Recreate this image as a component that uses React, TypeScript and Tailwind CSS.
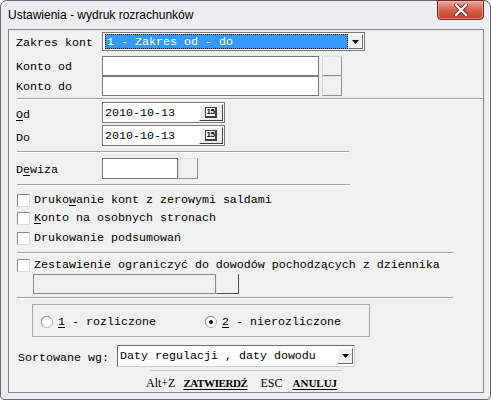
import React from 'react';

const mono = "font-['Liberation_Mono','Courier_New',monospace] text-[11.67px] leading-none text-black";

const Etched = ({ w, ml = 'ml-[8px]' }: { w?: string; ml?: string }) => (
  <div className={`h-[2px] border-t border-t-[#a0a0a0] border-b border-b-white ${ml} ${w ?? ''}`} />
);

const Field = ({ w, children }: { w: string; children?: React.ReactNode }) => (
  <div className={`h-full ${w} bg-white border border-[#7a7a7a] flex items-center pl-[2px]`}>{children}</div>
);

const SideButton = ({ w = 'w-[20px]' }: { w?: string }) => (
  <div className={`h-full ${w} bg-[#f0f0f0] border border-t-[#e0e0e0] border-l-[#d4d4d4] border-r-[#909090] border-b-[#909090]`} />
);

const Arrow = () => (
  <svg width="7" height="4" viewBox="0 0 7 4">
    <path d="M0 0h7L3.5 4z" fill="#000" />
  </svg>
);

const DropButton = ({ cls }: { cls: string }) => (
  <div className={`${cls} bg-[#f0f0f0] border border-t-white border-l-white border-r-[#6a6a6a] border-b-[#6a6a6a] flex items-center justify-center`}>
    <Arrow />
  </div>
);

const Checkbox = () => (
  <div className="w-[13px] h-[13px] bg-white border border-t-[#8a8a8a] border-l-[#8a8a8a] border-r-[#dedede] border-b-[#dedede] shrink-0" />
);

const Radio = ({ checked }: { checked?: boolean }) => (
  <svg width="12" height="12" viewBox="0 0 12 12" className="shrink-0">
    <circle cx="6" cy="6" r="5.5" fill="#fff" stroke="#b4b4b4" />
    <path d="M1.8 9.5A5 5 0 0 1 9.5 1.8" fill="none" stroke="#8c8c8c" />
    {checked && <circle cx="6" cy="6" r="2" fill="#111" />}
  </svg>
);

const CalendarButton = () => (
  <div className="h-[17px] w-[24px] bg-[#f0f0f0] border border-t-white border-l-white border-r-[#404040] border-b-[#404040] flex items-center justify-center">
    <div className="h-[11px] w-[12px] border border-[#404040] border-r-2 border-b-2 bg-white flex items-center justify-center">
      <span className="font-['Liberation_Sans',sans-serif] text-[8px] font-bold leading-none tracking-[-0.5px] text-black">15</span>
    </div>
  </div>
);

const DateField = ({ value }: { value: string }) => (
  <div className="h-full w-[123px] bg-white border border-[#7a7a7a] flex items-center justify-between pl-[2px] pr-[1px]">
    <span className={`${mono} translate-y-[1px]`}>{value}</span>
    <CalendarButton />
  </div>
);

const CheckRow = ({ mt, children }: { mt: string; children: React.ReactNode }) => (
  <div className={`${mt} h-[17px] flex items-center pl-[8px] gap-[4px]`}>
    <Checkbox />
    <span className={mono}>{children}</span>
  </div>
);

const U = ({ children }: { children: React.ReactNode }) => (
  <span className="underline underline-offset-[2px]">{children}</span>
);

export default function App() {
  return (
    <div className="w-[491px] h-[400px] bg-white">
      <div className="w-[491px] h-[400px] border border-[#6b6b6b] rounded-t-[7px] rounded-b-[4px] bg-[#eceef1] flex flex-col">
        {/* Title bar */}
        <div className="h-[28px] flex items-start">
          <span className="pl-[7px] pt-[7px] font-['Liberation_Sans',sans-serif] text-[12px] leading-[14px] text-black">
            Ustawienia - wydruk rozrachunków
          </span>
          <div className="flex-1" />
          <div className="-mt-[1px] mr-[6px] w-[47px] h-[20px] rounded-b-[4px] border border-[#6e2a22] bg-gradient-to-b from-[#e9a99c] via-[#d2604b] to-[#c2402c] flex items-center justify-center shadow-[inset_0_0_0_1px_rgba(255,200,190,0.5)]">
            <svg width="14" height="12" viewBox="0 0 14 12">
              <path d="M2 1l10 10M12 1L2 11" stroke="#5a1a12" strokeWidth="4" strokeLinecap="square" />
              <path d="M2 1l10 10M12 1L2 11" stroke="#fff" strokeWidth="2.4" strokeLinecap="square" />
            </svg>
          </div>
        </div>

        {/* Client area */}
        <div className="ml-[7px] w-[476px] h-[364px] border border-[#838383] bg-[#f0f0f0] flex flex-col">
          {/* Zakres kont */}
          <div className="mt-[2px] h-[19px] flex items-center pl-[7px]">
            <span className={`${mono} w-[86px] translate-y-[2px]`}>Zakres kont</span>
            <div className="h-full w-[263px] bg-white border border-[#7a7a7a] flex items-center">
              <div className="h-[15px] ml-[2px] w-[243px] bg-[#3399ff] outline-1 outline-dotted outline-black -outline-offset-1 flex items-center pl-[2px]">
                <span className={`${mono} text-white translate-y-[1px]`}>1 - Zakres od - do</span>
              </div>
              <DropButton cls="ml-auto mr-[1px] h-[15px] w-[15px]" />
            </div>
          </div>

          {/* Konto od */}
          <div className="mt-[5px] h-[20px] flex items-center pl-[7px]">
            <span className={`${mono} w-[86px] translate-y-[2px]`}>Konto od</span>
            <Field w="w-[217px]" />
            <div className="ml-[3px] h-full flex">
              <SideButton />
            </div>
          </div>
          {/* Konto do */}
          <div className="h-[20px] flex items-center pl-[7px]">
            <span className={`${mono} w-[86px] translate-y-[2px]`}>Konto do</span>
            <Field w="w-[217px]" />
            <div className="ml-[3px] h-full flex">
              <SideButton />
            </div>
          </div>

          <div className="mt-[2px]">
            <Etched />
          </div>

          {/* Od / Do */}
          <div className="mt-[2px] h-[21px] flex items-center pl-[7px]">
            <span className={`${mono} w-[86px] translate-y-[3px]`}>
              <U>O</U>d
            </span>
            <DateField value="2010-10-13" />
          </div>
          <div className="mt-[2px] h-[21px] flex items-center pl-[7px]">
            <span className={`${mono} w-[86px] translate-y-[3px]`}>Do</span>
            <DateField value="2010-10-13" />
          </div>

          <div className="mt-[5px]">
            <Etched w="w-[332px]" />
          </div>

          {/* Dewiza */}
          <div className="mt-[5px] h-[21px] flex items-center pl-[7px]">
            <span className={`${mono} w-[86px] translate-y-[2px]`}>
              D<U>e</U>wiza
            </span>
            <Field w="w-[76px]" />
            <div className="h-full flex">
              <SideButton />
            </div>
          </div>

          <div className="mt-[5px]">
            <Etched w="w-[333px]" />
          </div>

          <CheckRow mt="mt-[6px]">
            Druko<U>w</U>anie kont z zerowymi saldami
          </CheckRow>
          <CheckRow mt="mt-[1px]">
            <U>K</U>onto na osobnych stronach
          </CheckRow>
          <CheckRow mt="mt-[3px]">Drukowanie podsumowań</CheckRow>

          <div className="mt-[5px]">
            <Etched w="w-[436px]" />
          </div>

          <CheckRow mt="mt-[3px]">Zestawienie ograniczyć do dowodów pochodzących z dziennika</CheckRow>
          <div className="h-[20px] flex pl-[24px]">
            <div className="h-full w-[183px] bg-[#f0f0f0] border border-[#8a8a8a]" />
            <div className="h-full w-[23px] bg-[#f0f0f0] border-r border-b border-r-[#505050] border-b-[#505050] border-l border-l-[#e8e8e8]" />
          </div>

          <div className="mt-[3px]">
            <Etched w="w-[436px]" />
          </div>

          {/* Radio group */}
          <div className="mt-[5px] ml-[23px] w-[338px] h-[33px] border border-[#a8a8a8] flex items-center pt-[3px]">
            <div className="ml-[8px] w-[164px] flex items-center gap-[5px]">
              <Radio />
              <span className={`${mono} translate-y-[1px]`}>
                <U>1</U> - rozliczone
              </span>
            </div>
            <div className="flex items-center gap-[5px]">
              <Radio checked />
              <span className={`${mono} translate-y-[1px]`}>
                <U>2</U> - nierozliczone
              </span>
            </div>
          </div>

          {/* Sortowane */}
          <div className="mt-[8px] h-[22px] flex items-center pl-[9px]">
            <span className={`${mono} w-[99px] translate-y-[3px]`}>Sortowane wg:</span>
            <div className="h-full w-[238px] bg-white border border-t-[#6a6a6a] border-l-[#6a6a6a] border-r-[#d0d0d0] border-b-[#d0d0d0] flex items-center pl-[2px]">
              <span className={`${mono} translate-y-[1px]`}>Daty regulacji , daty dowodu</span>
              <DropButton cls="ml-auto mr-[1px] h-[16px] w-[16px]" />
            </div>
          </div>

          <div className="mt-[3px] ml-[141px] w-[191px] h-[1px] bg-[#c8c8c8]" />

          {/* Footer */}
          <div className="mt-[4px] h-[16px] flex items-center pl-[137px] font-['Liberation_Serif',serif] text-[12px] text-black leading-none">
            <span>Alt+Z</span>
            <span className="ml-[8px] font-bold text-[11px] tracking-[-0.4px] underline underline-offset-[2px]">ZATWIERDŹ</span>
            <span className="ml-[13px]">ESC</span>
            <span className="ml-[10px] font-bold text-[11px] underline underline-offset-[2px]">ANULUJ</span>
          </div>
        </div>
      </div>
    </div>
  );
}
